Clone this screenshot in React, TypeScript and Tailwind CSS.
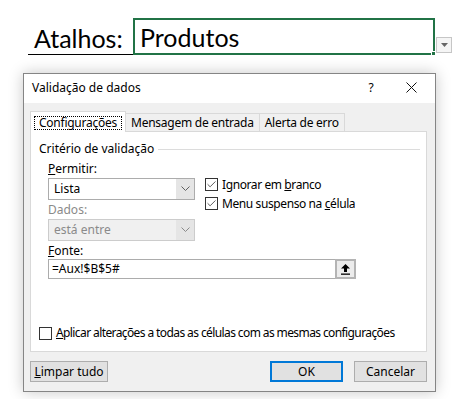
import { Check } from "lucide-react";

const ui = "font-['Segoe_UI','Noto_Sans',sans-serif] text-[12px] text-black";

function Chevron({ color = "#606060" }: { color?: string }) {
   return (
      <svg width="9" height="6" viewBox="0 0 9 6">
         <path d="M0.5 0.5 L4.5 4.5 L8.5 0.5" fill="none" stroke={color} strokeWidth="1" />
      </svg>
   );
}

function CheckBox({ checked }: { checked: boolean }) {
   return (
      <div className="w-[13px] h-[13px] border border-[#333333] bg-white flex items-center justify-center shrink-0">
         {checked && <Check size={11} strokeWidth={1.6} className="text-[#222]" />}
      </div>
   );
}

function Select({ value, disabled }: { value: string; disabled?: boolean }) {
   return (
      <div className={`w-[147px] h-[22px] flex border ${disabled ? "border-[#cccccc] bg-[#f0f0f0] text-[#8a8a8a]" : "border-[#acacac] bg-white"}`}>
         <div className="flex-1 flex items-center pl-[5px]">{value}</div>
         <div className="w-[18px] flex items-center justify-center bg-[#e5e5e5]">
            <Chevron color={disabled ? "#8a8a8a" : "#606060"} />
         </div>
      </div>
   );
}

function Button({ label, u, primary, w }: { label: string; u?: boolean; primary?: boolean; w: string }) {
   return (
      <div className={`${w} h-[21px] flex items-center justify-center bg-[#e1e1e1] ${primary ? "border-2 border-[#0078d7]" : "border border-[#adadad]"}`}>
         {u ? <span><span className="underline">{label[0]}</span>{label.slice(1)}</span> : label}
      </div>
   );
}

export default function App() {
   return (
      <div className="w-[466px] h-[399px] bg-white overflow-hidden">
         {/* Planilha */}
         <div className="flex items-end pt-[18px] pl-[28px] font-['Lato','Carlito',sans-serif] text-[25px] text-black">
            <div className="w-[105px] h-[37px] border-b border-black flex items-end pl-[6px] leading-[30px] pb-[1px]">
               Atalhos:
            </div>
            <div className="relative w-[302px] h-[37px] border-2 border-[#217346] flex items-end pl-[5px] leading-[30px] pb-[1px]">
               Produtos
               <div className="absolute -right-[3px] -bottom-[3px] w-[5px] h-[5px] bg-[#217346] border border-white" />
            </div>
            <div className="w-[16px] h-[16px] mb-[2px] ml-[1px] border border-[#c6c6c6] bg-[#f5f5f5] flex items-center justify-center">
               <svg width="7" height="4" viewBox="0 0 7 4"><path d="M0 0 L7 0 L3.5 4 Z" fill="#666" /></svg>
            </div>
         </div>

         {/* Dialogo */}
         <div className={`ml-[23px] mt-[18px] w-[413px] h-[319px] border border-[#858585] bg-[#f0f0f0] shadow-[0_0_14px_rgba(0,0,0,0.22)] flex flex-col ${ui}`}>
            <div className="h-[29px] bg-white flex items-center pl-[8px] pb-[2px]">
               <span className="flex-1">Validação de dados</span>
               <span className="w-[20px] text-center mr-[25px]">?</span>
               <svg width="11" height="11" viewBox="0 0 11 11" className="mr-[18px]">
                  <path d="M0.5 0.5 L10.5 10.5 M10.5 0.5 L0.5 10.5" stroke="#111" strokeWidth="1" />
               </svg>
            </div>

            <div className="flex-1 flex flex-col px-[6px] pt-[8px]">
               {/* Abas */}
               <div className="flex items-end h-[20px] tracking-[-0.25px]">
                  <div className="h-[21px] -mb-px relative z-10 bg-white border border-[#d9d9d9] border-b-0 px-[3px] pt-[4px] flex">
                     <span className="border border-dotted border-black px-[4px] leading-[12px] h-[14px]">Configurações</span>
                  </div>
                  <div className="h-[18px] border border-[#d9d9d9] border-l-0 border-b-0 bg-[#f0f0f0] px-[5px] flex items-center">Mensagem de entrada</div>
                  <div className="h-[18px] border border-[#d9d9d9] border-l-0 border-b-0 bg-[#f0f0f0] px-[5px] flex items-center">Alerta de erro</div>
               </div>

               {/* Painel */}
               <div className="w-[397px] h-[221px] bg-white border border-[#d9d9d9] flex flex-col pl-[8px] pr-[6px] pt-[8px]">
                  <div className="flex items-center gap-[4px] h-[18px]">
                     <span>Critério de validação</span>
                     <div className="flex-1 h-px bg-[#dcdcdc]" />
                  </div>
                  <div className="pl-[9px] flex flex-col">
                     <div className="mt-[3px] h-[16px] leading-[16px]"><span className="underline">P</span>ermitir:</div>
                     <div className="flex gap-[10px] mt-[1px]">
                        <div className="flex flex-col">
                           <Select value="Lista" />
                           <div className="mt-[1px] h-[18px] leading-[18px] text-[#8a8a8a]">Dados:</div>
                           <Select value="está entre" disabled />
                        </div>
                        <div className="flex flex-col gap-[6px] tracking-[-0.4px]">
                           <div className="flex items-center gap-[4px] h-[13px]">
                              <CheckBox checked />
                              <span>Ignorar em <span className="underline">b</span>ranco</span>
                           </div>
                           <div className="flex items-center gap-[4px] h-[13px]">
                              <CheckBox checked />
                              <span>Menu suspenso na <span className="underline">c</span>élula</span>
                           </div>
                        </div>
                     </div>
                     <div className="mt-[2px] h-[16px] leading-[16px]"><span className="underline">F</span>onte:</div>
                     <div className="w-[308px] h-[20px] border border-[#acacac] bg-white flex">
                        <div className="flex-1 flex items-center pl-[3px]">=Aux!$B$5#</div>
                        <div className="w-[21px] border-2 border-[#b4b4b4] bg-[#ececec] -my-px -mr-px flex items-center justify-center">
                           <svg width="9" height="11" viewBox="0 0 9 11">
                              <path d="M4.5 0 L9 4.5 L6 4.5 L6 8 L3 8 L3 4.5 L0 4.5 Z" fill="#000" />
                              <rect x="0" y="9.5" width="9" height="1.3" fill="#000" />
                           </svg>
                        </div>
                     </div>
                  </div>
                  <div className="flex-1" />
                  <div className="flex items-center gap-[4px] mb-[9px]">
                     <CheckBox checked={false} />
                     <span className="whitespace-nowrap tracking-[-0.6px]"><span className="underline">A</span>plicar alterações a todas as células com as mesmas configurações</span>
                  </div>
               </div>

               {/* Botoes */}
               <div className="flex mt-[9px]">
                  <Button label="Limpar tudo" u w="w-[78px]" />
                  <div className="flex-1" />
                  <Button label="OK" primary w="w-[73px]" />
                  <div className="w-[11px]" />
                  <Button label="Cancelar" w="w-[73px]" />
                  <div className="w-[2px]" />
               </div>
            </div>
         </div>
      </div>
   );
}
